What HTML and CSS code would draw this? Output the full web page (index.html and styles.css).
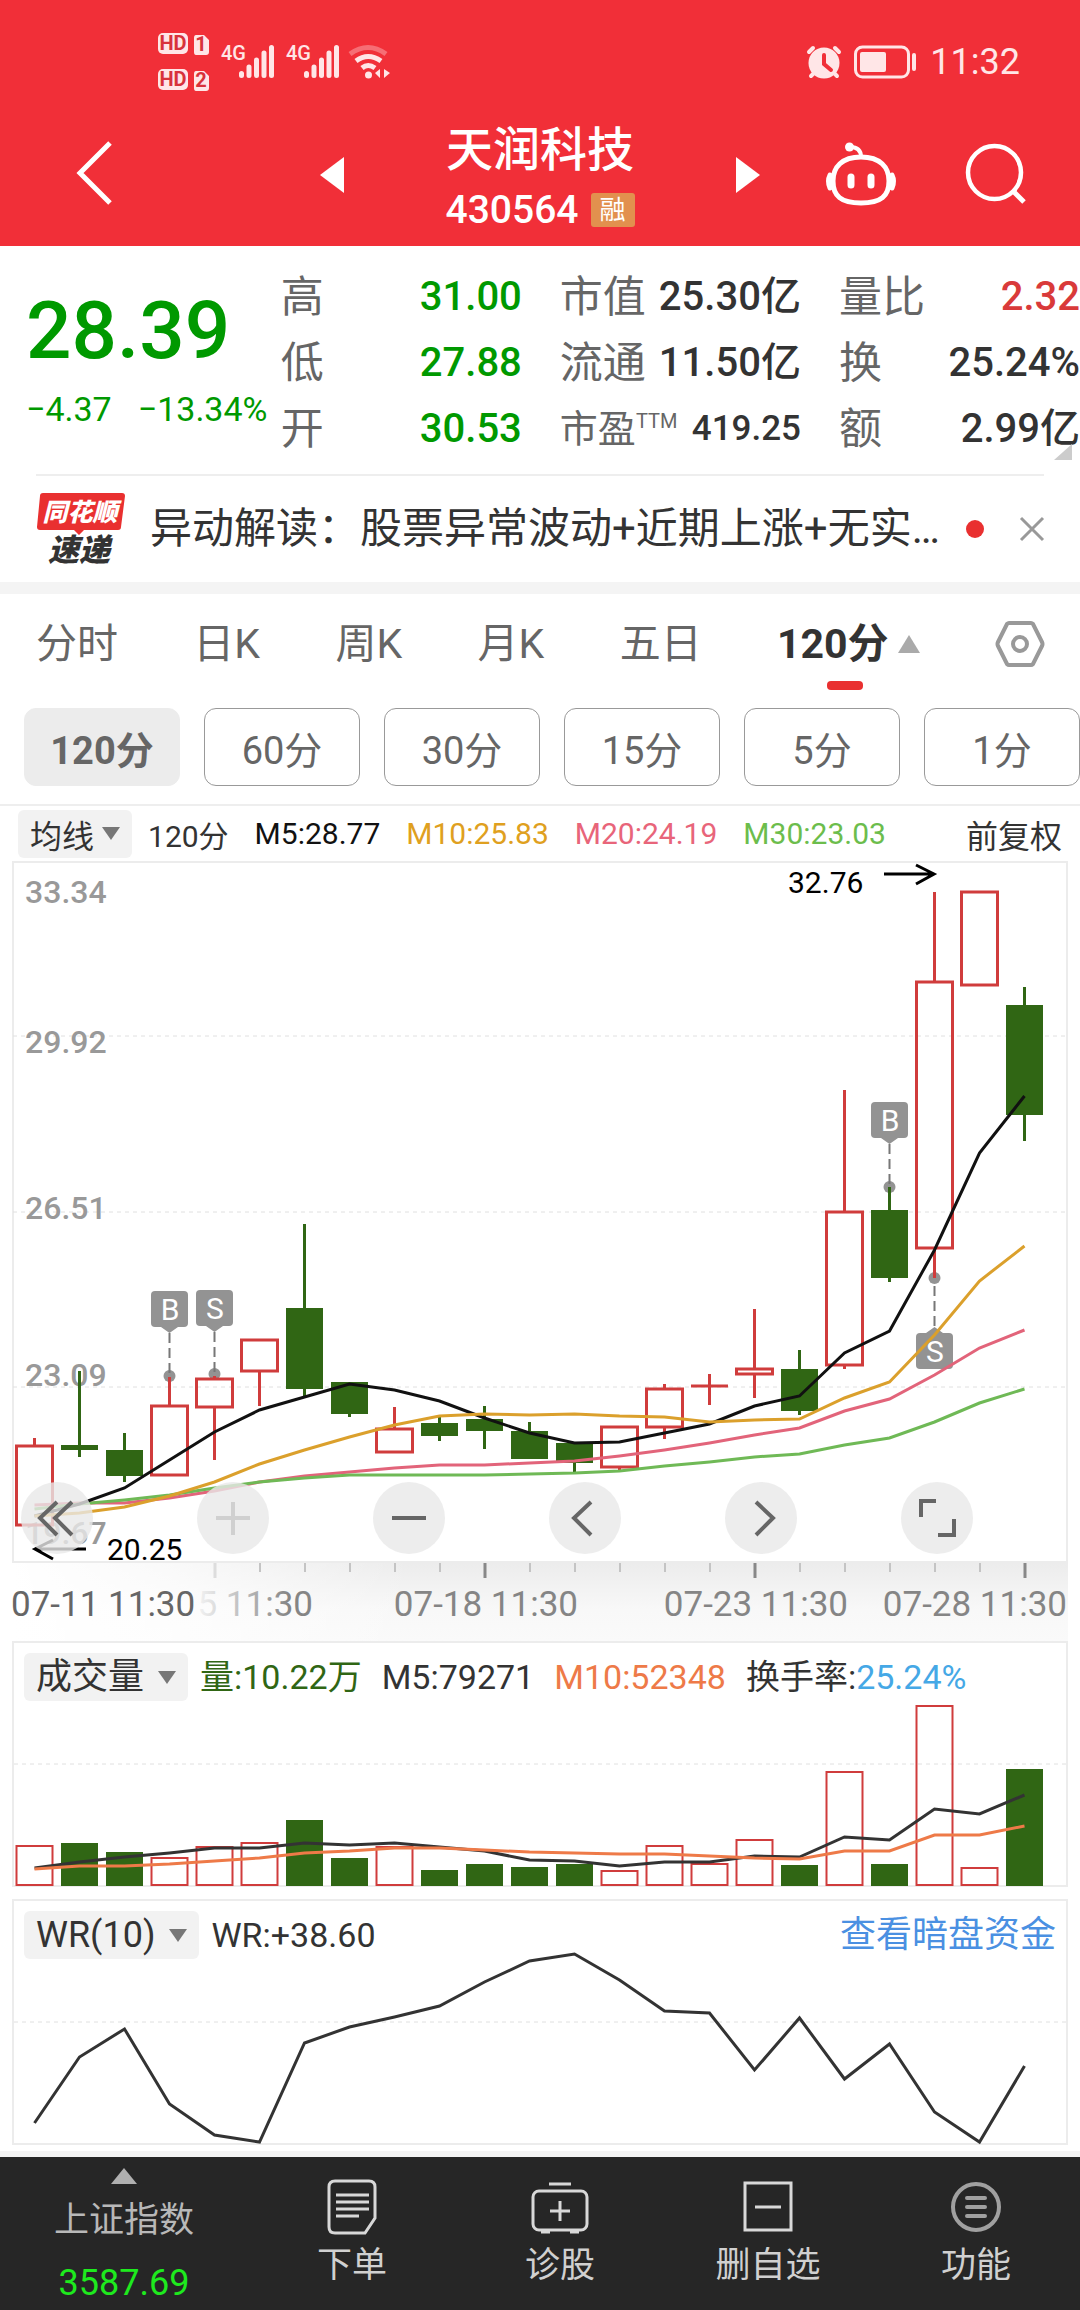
FILE: index.html
```html
<!DOCTYPE html>
<html lang="zh-CN">

<head>
    <meta charset="utf-8">
    <meta name="viewport" content="width=device-width, initial-scale=1">
    <title>天润科技 430564</title>
    <link rel="stylesheet" href="styles.css">
</head>

<body>
    <header class="top">
        <div class="status">
            <svg class="status-left" width="236" height="64" viewBox="156 30 236 64" fill="#ffe6e7">
                <rect x="158" y="33" width="30" height="21" rx="5" />
                <rect x="158" y="69" width="30" height="21" rx="5" />
                <path d="M196 35h8l5 5v12q0 3-3 3h-10q-2 0-2-3v-14q0-3 2-3zM196 71h8l5 5v12q0 3-3 3h-10q-2 0-2-3v-14q0-3 2-3z" />
                <g class="hd">
                    <text x="173" y="50">HD</text>
                    <text x="173" y="86">HD</text>
                    <text x="201" y="51">1</text>
                    <text x="201" y="87">2</text>
                </g>
                <text class="net" x="221" y="60">4G</text>
                <text class="net" x="286" y="60">4G</text>
                <g stroke="#ffe6e7" stroke-width="5" stroke-linecap="round">
                    <path d="M241.500 73.500v2M249 67v8.500M256.500 60v15.500M264 53v22.500M271.500 47.500v28" />
                    <path d="M306.500 73.500v2M314 67v8.500M321.500 60v15.500M329 53v22.500M336.500 47.500v28" />
                </g>
                <g fill="none" stroke="#ffe6e7" stroke-width="5">
                    <path d="M350 54q18-13 36 0" opacity=".35" />
                    <path d="M356 61q12-9 25 0M362 68q6-5 13 0" />
                </g>
                <circle cx="368.500" cy="75" r="3.500" />
                <path d="M380 69v9l-5-5zM384 69l6 4-6 5z" />
            </svg>
            <svg width="36" height="34" viewBox="0 0 36 34">
                <circle cx="18" cy="18" r="15.500" fill="#ffe6e7" />
                <path d="M3 7l4-4M33 7l-4-4M5 31l5-5M31 31l-5-5" stroke="#ffe6e7" stroke-width="4" stroke-linecap="round" />
                <path d="M18 10v9l7 6" fill="none" stroke="#f12f38" stroke-width="4" stroke-linecap="round" />
            </svg>
            <svg width="64" height="34" viewBox="0 0 64 34" fill="#ffe6e7">
                <rect x="1.500" y="2" width="53" height="30" rx="7" fill="none" stroke="#ffe6e7" stroke-width="3" />
                <rect x="6" y="7" width="26" height="20" rx="2" />
                <rect x="58" y="8" width="4" height="18" rx="2" />
            </svg>
            <span class="clock">11:32</span>
        </div>
        <div class="titlebar">
            <div class="side">
                <button class="icon-btn" aria-label="返回">
                    <svg width="36" height="64" viewBox="0 0 36 64" fill="none" stroke="#fff" stroke-width="5"><path d="M34 2L4 32l30 30" /></svg>
                </button>
            </div>
            <div class="switcher">
                <button class="icon-btn" aria-label="上一只">
                    <svg width="24" height="36" viewBox="0 0 24 36" fill="#fff"><path d="M24 0v36L0 18z" /></svg>
                </button>
                <div class="stock">
                    <h1>天润科技</h1>
                    <p><span>430564</span><span class="tag">融</span></p>
                </div>
                <button class="icon-btn" aria-label="下一只">
                    <svg width="24" height="36" viewBox="0 0 24 36" fill="#fff"><path d="M0 0v36l24-18z" /></svg>
                </button>
            </div>
            <div class="side right">
                <button class="icon-btn" aria-label="智能助手">
                    <svg width="70" height="64" viewBox="0 0 70 64" fill="none" stroke="#fff" stroke-width="5">
                        <path d="M35 15c19 0 28 10 28 24 0 15-8 22-28 22S7 54 7 39c0-14 9-24 28-24z" />
                        <path d="M24 5c7 0 11 3 11 10" stroke-width="4" />
                        <circle cx="23.500" cy="5" r="4.500" fill="#fff" stroke="none" />
                        <path d="M4 33q-3 6 0 13M66 33q3 6 0 13" stroke-width="5" stroke-linecap="round" />
                        <path d="M25 35v8M45 35v8" stroke-width="7" stroke-linecap="round" />
                    </svg>
                </button>
                <button class="icon-btn" aria-label="搜索">
                    <svg width="60" height="60" viewBox="0 0 60 60" fill="none" stroke="#fff" stroke-width="4.500">
                        <circle cx="28.500" cy="28.500" r="26.500" />
                        <path d="M47 47l11 11" stroke-width="5" />
                    </svg>
                </button>
            </div>
        </div>
    </header>

    <section class="quote">
        <div class="price down">
            <strong>28.39</strong>
            <p><span>−4.37</span><span>−13.34%</span></p>
        </div>
        <dl class="stats">
            <div><dt>高</dt><dd class="down">31.00</dd></div>
            <div><dt>市值</dt><dd>25.30亿</dd></div>
            <div><dt>量比</dt><dd class="up">2.32</dd></div>
            <div><dt>低</dt><dd class="down">27.88</dd></div>
            <div><dt>流通</dt><dd>11.50亿</dd></div>
            <div><dt>换</dt><dd>25.24%</dd></div>
            <div><dt>开</dt><dd class="down">30.53</dd></div>
            <div class="pe"><dt>市盈<sup>TTM</sup></dt><dd>419.25</dd></div>
            <div><dt>额</dt><dd>2.99亿</dd></div>
        </dl>
        <i class="corner"></i>
    </section>

    <section class="news">
        <svg class="news-logo" width="90" height="74" viewBox="0 0 90 74">
            <path d="M7 1h79q3 0 3 3l-4 31q0 3-3 3H48l-5 5-5-5H4q-3 0-3-3L4 4q0-3 3-3z" fill="#e93030" />
            <text x="44" y="29" font-size="25" fill="#fff">同花顺</text>
            <text x="43" y="69" font-size="31" fill="#333">速递</text>
        </svg>
        <a href="#">异动解读：股票异常波动+近期上涨+无实…</a>
        <i class="dot"></i>
        <button class="icon-btn" aria-label="关闭">
            <svg width="24" height="24" viewBox="0 0 24 24" stroke="#999" stroke-width="3"><path d="M1 1l22 22M23 1L1 23" /></svg>
        </button>
    </section>

    <nav class="tabs">
        <button>分时</button>
        <button>日K</button>
        <button>周K</button>
        <button>月K</button>
        <button>五日</button>
        <button class="active"><span>120分</span><svg width="24" height="20" viewBox="0 0 24 20" fill="#aaa"><path d="M12 1l11 18H1z" /></svg></button>
        <button aria-label="设置">
            <svg width="48" height="46" viewBox="0 0 48 46" fill="none" stroke="#999" stroke-width="4">
                <path d="M13 2h22q1 0 2 1l9 18q1 2 0 4l-9 18q-1 1-2 1H13q-1 0-2-1L2 25q-1-2 0-4l9-18q1-1 2-1z" />
                <circle cx="24" cy="23" r="7" />
            </svg>
        </button>
    </nav>
    <div class="periods">
        <button class="active">120分</button>
        <button>60分</button>
        <button>30分</button>
        <button>15分</button>
        <button>5分</button>
        <button>1分</button>
    </div>

    <div class="legend">
        <button class="pill">均线<i></i></button>
        <span class="cycle">120分</span>
        <span class="m5">M5:28.77</span>
        <span class="m10">M10:25.83</span>
        <span class="m20">M20:24.19</span>
        <span class="m30">M30:23.03</span>
        <a class="adjust" href="#">前复权</a>
    </div>

    <section class="kline">
        <svg class="plot" viewBox="0 0 1080 702">
            <rect class="frame" x="13" y="1" width="1054" height="700" />
            <path class="grid" d="M13 175H1067M13 351H1067M13 526H1067" />
            <g class="scale">
                <text x="25" y="42">33.34</text>
                <text x="25" y="192">29.92</text>
                <text x="25" y="358">26.51</text>
                <text x="25" y="525">23.09</text>
                <text x="25" y="683">19.67</text>
            </g>
            <!-- buy / sell marks -->
            <g class="mark">
                <circle cx="169.500" cy="515" r="6" />
                <circle cx="214.500" cy="513" r="6" />
                <circle cx="889.500" cy="326" r="6" />
                <circle cx="934.500" cy="417" r="6" />
                <path class="lead" d="M169.500 472v43M214.500 471v42M889.500 283v43M934.500 425v42" />
                <path d="M161 466h17l-8.500 6zM206 465h17l-8.500 6zM881 277h17l-8.500 6zM926 472h17l-8.500-6z" />
                <rect x="151" y="430" width="37" height="36" rx="4" />
                <rect x="196" y="429" width="37" height="36" rx="4" />
                <rect x="871" y="241" width="37" height="36" rx="4" />
                <rect x="916" y="472" width="37" height="36" rx="4" />
                <text x="170" y="459">B</text>
                <text x="215" y="458">S</text>
                <text x="890" y="270">B</text>
                <text x="935" y="501">S</text>
            </g>
            <!-- rising candles -->
            <path class="rise" d="M34.500 577v8M16.500 585h36v79h-36z
                M169.500 516v29M151.500 545h36v69h-36z
                M214.500 515v3M214.500 546v53M196.500 518h36v28h-36z
                M259.500 510v35M241.500 479h36v31h-36z
                M394.500 546v22M376.500 568h36v23h-36z
                M619.500 606v3M601.500 566h36v40h-36z
                M664.500 523v5M664.500 566v12M646.500 528h36v38h-36z
                M709.500 513v31M691 525h37
                M754.500 448v60M754.500 513v24M736.500 508h36v5h-36z
                M844.500 229v122M844.500 504v4M826.500 351h36v153h-36z
                M934.500 31v90M934.500 387v30M916.500 121h36v266h-36z
                M961.500 31h36v93h-36z" />
            <!-- falling candles -->
            <path class="fall-wick" d="M79.500 510v86M124.500 572v49M304.500 363v172M349.500 521v35M439.500 556v24M484.500 545v43M529.500 561v37M574.500 582v29M799.500 489v65M889.500 326v95M1024.500 126v154" />
            <path class="fall" d="M61 584h37v5h-37zM106 589h37v26h-37zM286 447h37v81h-37zM331 521h37v32h-37zM421 562h37v13h-37zM466 558h37v12h-37zM511 570h37v28h-37zM556 582h37v20h-37zM781 508h37v42h-37zM871 349h37v68h-37zM1006 144h37v110h-37z" />
            <polyline class="line m20" points="34.500,644 79.500,642 124.500,642 169.500,637 214.500,630 259.500,621 304.500,615 349.500,611 394.500,607 439.500,604 484.500,604 529.500,602 574.500,600 619.500,595 664.500,589 709.500,582 754.500,574 799.500,567 844.500,550 889.500,538 934.500,514 979.500,487 1024.500,469" />
            <polyline class="line m30" points="34.500,648 79.500,643 124.500,639 169.500,634 214.500,627 259.500,621 304.500,617 349.500,614 394.500,614 439.500,614 484.500,614 529.500,613 574.500,612 619.500,610 664.500,605 709.500,601 754.500,596 799.500,593 844.500,584 889.500,577 934.500,561 979.500,542 1024.500,528" />
            <polyline class="line m5" points="34.500,655 79.500,643 124.500,627 169.500,599 214.500,571 259.500,549 304.500,536 349.500,523 394.500,529 439.500,540 484.500,557 529.500,572 574.500,582 619.500,581 664.500,572 709.500,563 754.500,545 799.500,535 844.500,492 889.500,470 934.500,389 979.500,292 1024.500,235" />
            <polyline class="line m10" points="34.500,655 79.500,652 124.500,646 169.500,635 214.500,621 259.500,603 304.500,589 349.500,576 394.500,564 439.500,555 484.500,553 529.500,554 574.500,553 619.500,555 664.500,556 709.500,561 754.500,559 799.500,558 844.500,537 889.500,521 934.500,474 979.500,420 1024.500,385" />
            <g class="extreme">
                <text x="788" y="32">32.76</text>
                <path d="M884 13h50M916 4l18 9-18 10" />
                <text x="107" y="699">20.25</text>
                <path d="M86 688H36M53 679l-18 9 18 10" />
            </g>
        </svg>
        <div class="tools">
            <button aria-label="最早"><svg viewBox="0 0 72 72"><path d="M36 20L19 36l17 17M51 20L34 36l17 17" /></svg></button>
            <button aria-label="放大" disabled><svg viewBox="0 0 72 72"><path d="M36 20v33M19 36h34" /></svg></button>
            <button aria-label="缩小"><svg viewBox="0 0 72 72"><path d="M19 36h34" /></svg></button>
            <button aria-label="左移"><svg viewBox="0 0 72 72"><path d="M42 20L25 36l17 17" /></svg></button>
            <button aria-label="右移"><svg viewBox="0 0 72 72"><path d="M31 20l17 16-17 17" /></svg></button>
            <button aria-label="全屏"><svg viewBox="0 0 72 72"><path d="M20 35V19h15M53 37v16H37" /></svg></button>
        </div>
    </section>
    <svg class="axis" viewBox="0 0 1080 78">
        <defs>
            <linearGradient id="shade" x1="0" y1="0" x2="0" y2="1">
                <stop offset="0" stop-color="#ececec" />
                <stop offset=".6" stop-color="#f8f8f8" />
                <stop offset="1" stop-color="#fafafa" />
            </linearGradient>
            <linearGradient id="fade" x1="0" y1="0" x2="1" y2="0">
                <stop offset="0" stop-color="#fff" />
                <stop offset=".4" stop-color="#fff" stop-opacity=".7" />
                <stop offset="1" stop-color="#fff" stop-opacity="0" />
            </linearGradient>
            <linearGradient id="textFade" gradientUnits="userSpaceOnUse" x1="200" y1="0" x2="290" y2="0">
                <stop offset="0" stop-color="#f0f0f0" />
                <stop offset="1" stop-color="#858585" />
            </linearGradient>
        </defs>
        <rect x="12" y="0" width="1056" height="78" fill="url(#shade)" />
        <rect x="12" y="0" width="400" height="78" fill="url(#fade)" />
        <path d="M260 0v9M305 0v9M350 0v9M395 0v9M440 0v9M530 0v9M575 0v9M620 0v9M665 0v9M710 0v9M800 0v9M845 0v9M890 0v9M935 0v9M980 0v9" stroke="#c4c4c4" stroke-width="2" />
        <path d="M215 0v15" stroke="#ddd" stroke-width="3" />
        <path d="M485 0v15M755 0v15M1025 0v15" stroke="#888" stroke-width="3" />
        <text class="first" x="11" y="53">07-11 11:30</text>
        <text class="faded" x="313" y="53">5 11:30</text>
        <text x="578" y="53">07-18 11:30</text>
        <text x="848" y="53">07-23 11:30</text>
        <text x="1067" y="53">07-28 11:30</text>
    </svg>

    <section class="panel">
        <svg class="plot" viewBox="14 0 1052 242">
            <path class="grid" d="M14 121H1066" />
            <path class="vol-rise" d="M16.500 242v-39h36v39zM151.500 242v-27h36v27zM196.500 242v-38h36v38zM241.500 242v-42h36v42zM376.500 242v-38h36v38zM601.500 242v-14h36v14zM646.500 242v-39h36v39zM691.500 242v-21h36v21zM736.500 242v-45h36v45zM826.500 242v-113h36v113zM916.500 242v-179h36v179zM961.500 242v-17h36v17z" />
            <path class="fall" d="M61 243v-43h37v43zM106 243v-34h37v34zM286 243v-66h37v66zM331 243v-28h37v28zM421 243v-16h37v16zM466 243v-22h37v22zM511 243v-19h37v19zM556 243v-22h37v22zM781 243v-21h37v21zM871 243v-22h37v22zM1006 243v-117h37v117z" />
            <polyline class="line dark" points="34.500,225 79.500,219 124.500,214 169.500,210 214.500,205 259.500,205 304.500,200 349.500,202 394.500,200 439.500,204 484.500,208 529.500,217 574.500,218 619.500,223 664.500,219 709.500,219 754.500,213 799.500,214 844.500,194 889.500,197 934.500,166 979.500,171 1024.500,152" />
            <polyline class="line orange" points="34.500,226 79.500,223 124.500,223 169.500,221 214.500,218 259.500,215 304.500,210 349.500,208 394.500,205 439.500,205 484.500,207 529.500,209 574.500,210 619.500,211 664.500,211 709.500,213 754.500,215 799.500,216 844.500,208 889.500,208 934.500,192 979.500,192 1024.500,183" />
        </svg>
        <div class="panel-head">
            <button class="pill">成交量<i></i></button>
            <span class="vol">量:10.22万</span>
            <span>M5:79271</span>
            <span class="avg10">M10:52348</span>
            <span>换手率:<b>25.24%</b></span>
        </div>
    </section>

    <section class="panel">
        <svg class="plot" viewBox="14 0 1052 242">
            <path class="grid" d="M14 121H1066" />
            <polyline class="line dark" points="34.500,222 79.500,156 124.500,128 169.500,203 214.500,234 259.500,241 304.500,142 349.500,126 394.500,116 439.500,105 484.500,81 529.500,60 574.500,53 619.500,79 664.500,110 709.500,112 754.500,169 799.500,117 844.500,178 889.500,143 934.500,211 979.500,241 1024.500,165" />
        </svg>
        <div class="panel-head">
            <button class="pill">WR(10)<i></i></button>
            <span>WR:+38.60</span>
            <a class="dark-pool" href="#">查看暗盘资金</a>
        </div>
    </section>

    <nav class="bottom">
        <a class="index" href="#">
            <svg width="26" height="16" viewBox="0 0 26 16" fill="#b0b0b0"><path d="M13 0l13 16H0z" /></svg>
            <span>上证指数</span>
            <b>3587.69</b>
        </a>
        <a href="#">
            <svg width="58" height="56" viewBox="0 0 58 56">
                <path d="M12 2h34q6 0 6 6v31L42 54H12q-6 0-6-6V8q0-6 6-6z" />
                <path d="M13 16h33M13 23h33M13 30h33M13 37h23" />
            </svg>
            <span>下单</span>
        </a>
        <a href="#">
            <svg width="58" height="56" viewBox="0 0 58 56">
                <rect x="2" y="12" width="54" height="39" rx="6" />
                <path d="M18 5h22M10 53h9M39 53h9M29 22v20M19 32h20" />
            </svg>
            <span>诊股</span>
        </a>
        <a href="#">
            <svg width="58" height="56" viewBox="0 0 58 56">
                <rect x="6" y="4" width="46" height="47" />
                <path d="M16 28h26" />
            </svg>
            <span>删自选</span>
        </a>
        <a href="#">
            <svg class="grey" width="58" height="56" viewBox="0 0 58 56">
                <circle cx="29" cy="28" r="23" />
                <path d="M20 19h18M20 28h18M20 37h18" stroke-linecap="round" />
            </svg>
            <span>功能</span>
        </a>
    </nav>
</body>

</html>
```
FILE: styles.css
```css
* {
    box-sizing: border-box;
}

body {
    margin: 0;
    background: #fff;
    color: #333;
    font-family: Roboto, "Noto Sans CJK SC", sans-serif;
}

h1,
p,
dl,
dd {
    margin: 0;
}

h1 {
    font-weight: 500;
}

button {
    padding: 0;
    border: 0;
    background: none;
    color: inherit;
    font: inherit;
}

a {
    color: inherit;
    text-decoration: none;
}

svg {
    display: block;
    overflow: visible;
}

/* header */
.top {
    height: 246px;
    background: #f12f38;
    color: #fff;
}

.status {
    display: flex;
    align-items: center;
    gap: 12px;
    height: 120px;
    padding: 4px 60px 0 156px;
    color: #ffe6e7;
}

.status-left {
    margin-right: auto;
}

.hd {
    fill: #d8323b;
    font-size: 20px;
    font-weight: 700;
    text-anchor: middle;
}

.net {
    font-size: 20px;
    font-weight: 500;
}

.clock {
    font-size: 36px;
}

.titlebar {
    display: grid;
    grid-template-columns: 1fr 440px 1fr;
    height: 112px;
    padding: 0 54px;
}

.side,
.switcher {
    display: flex;
    align-items: center;
}

.side {
    padding: 0 0 14px 22px;
}

.side.right {
    justify-content: flex-end;
    gap: 70px;
    padding: 0 0 12px;
}

.switcher {
    justify-content: space-between;
}

.switcher .icon-btn {
    margin-bottom: 10px;
}

.stock {
    text-align: center;
}

.stock h1 {
    font-size: 47px;
    line-height: 60px;
}

.stock p {
    display: flex;
    justify-content: center;
    align-items: center;
    gap: 12px;
    font-size: 39px;
    font-weight: 500;
    line-height: 60px;
}

.tag {
    width: 44px;
    border-radius: 3px;
    background: #e2904e;
    font-size: 26px;
    font-weight: 400;
    line-height: 34px;
}

/* quote */
.quote {
    position: relative;
    display: flex;
    height: 228px;
    padding-top: 18px;
}

.price {
    flex: 0 0 26%;
    padding: 22px 0 0 26px;
}

.price strong {
    display: block;
    font-size: 80px;
    font-weight: 500;
    line-height: 90px;
}

.price p {
    display: flex;
    gap: 26px;
    font-size: 34px;
    line-height: 66px;
}

.stats {
    flex: 1;
    display: grid;
    grid-template-columns: repeat(3, 1fr);
    grid-auto-rows: 66px;
    column-gap: 38px;
}

.stats div {
    display: flex;
    justify-content: space-between;
    align-items: center;
    white-space: nowrap;
}

.stats dt {
    color: #666;
    font-size: 43px;
    line-height: 66px;
}

.stats dd {
    font-size: 40px;
    font-weight: 500;
    line-height: 66px;
}

.stats .pe dt {
    font-size: 38px;
}

.stats .pe dd {
    font-size: 35px;
}

.pe sup {
    font-size: 20px;
    line-height: 20px;
}

.down,
.stats .down {
    color: #009900;
}

.stats .up {
    color: #d93a3a;
}

.corner {
    position: absolute;
    right: 8px;
    bottom: 14px;
    border-left: 18px solid transparent;
    border-bottom: 16px solid #ccc;
}

/* news */
.news {
    display: flex;
    align-items: center;
    height: 108px;
    margin: 0 36px;
    border-top: 2px solid #eee;
}

.news-logo text {
    font-weight: 900;
    font-style: italic;
    text-anchor: middle;
}

.news a {
    flex: 1;
    margin-left: 24px;
    font-size: 42px;
    line-height: 60px;
    white-space: nowrap;
}

.dot {
    width: 18px;
    height: 18px;
    margin: 0 36px 0 12px;
    border-radius: 50%;
    background: #e93030;
}

/* tabs */
.tabs {
    display: flex;
    justify-content: space-between;
    align-items: center;
    height: 118px;
    padding: 0 36px 6px;
    border-top: 12px solid #f4f4f4;
    color: #666;
    font-size: 41px;
    line-height: 60px;
}

.tabs .active {
    position: relative;
    display: flex;
    align-items: center;
    gap: 8px;
    color: #333;
    font-weight: 700;
}

.tabs .active::after {
    content: "";
    position: absolute;
    left: 50px;
    bottom: -16px;
    width: 36px;
    height: 9px;
    border-radius: 4px;
    background: #e93030;
}

.periods {
    display: flex;
    gap: 24px;
    padding: 8px 0 18px 24px;
    border-bottom: 2px solid #eee;
    color: #666;
    font-size: 38px;
}

.periods button {
    flex: 1;
    height: 78px;
    border: 1px solid #999;
    border-radius: 12px;
}

.periods .active {
    border-color: #ececec;
    background: #ececec;
    font-weight: 700;
}

/* indicators */
.pill {
    display: flex;
    align-items: center;
    gap: 8px;
    height: 48px;
    padding: 0 12px;
    border-radius: 6px;
    background: #f2f2f2;
}

.pill i {
    border: 9px solid transparent;
    border-top: 13px solid #777;
    border-bottom: 0;
}

.legend {
    display: flex;
    align-items: center;
    gap: 26px;
    height: 55px;
    padding: 0 18px;
    font-size: 30px;
}

.legend .pill {
    margin-right: -10px;
    font-size: 32px;
}

.adjust {
    margin-left: auto;
    font-size: 32px;
}

.legend .m5 {
    color: #111;
}

.legend .m10 {
    color: #dfa020;
}

.legend .m20 {
    color: #e8657a;
}

.legend .m30 {
    color: #6cbd4c;
}

.kline {
    display: grid;
}

.kline > *,
.panel > * {
    grid-area: 1 / 1;
}

.plot,
.axis {
    width: 100%;
}

.frame {
    fill: none;
    stroke: #ececec;
    stroke-width: 2;
}

.grid {
    stroke: #e0e0e0;
    stroke-width: 1;
    stroke-dasharray: 4 4;
}

.scale text {
    fill: #999;
    font-size: 32px;
    font-weight: 500;
}

.rise,
.vol-rise {
    fill: none;
    stroke: #d03c3c;
    stroke-width: 3;
}

.vol-rise {
    stroke-width: 2;
}

.fall {
    fill: #306614;
}

.fall-wick {
    stroke: #306614;
    stroke-width: 3;
}

.line {
    fill: none;
    stroke-width: 3;
}

.line.m5 {
    stroke: #111;
}

.line.m10 {
    stroke: #dba02c;
}

.line.m20 {
    stroke: #e2647a;
}

.line.m30 {
    stroke: #6fb956;
}

.line.dark {
    stroke: #333;
}

.line.orange {
    stroke: #ee7a48;
}

.mark {
    fill: #939393;
}

.mark .lead {
    stroke: #777;
    stroke-width: 2;
    stroke-dasharray: 10 5;
}

.mark text {
    fill: #fff;
    font-size: 30px;
    text-anchor: middle;
}

.extreme text {
    font-size: 30px;
}

.extreme path {
    fill: none;
    stroke: #000;
    stroke-width: 3;
}

.tools {
    align-self: end;
    display: flex;
    justify-content: space-between;
    padding: 0 107px 9px 21px;
}

.tools button {
    width: 72px;
    height: 72px;
    border-radius: 50%;
    background: rgba(232, 232, 232, .8);
}

.tools svg {
    fill: none;
    stroke: #666;
    stroke-width: 4;
}

.tools button:disabled svg {
    stroke: #d0d0d0;
}

.axis text {
    fill: #858585;
    font-size: 35px;
    text-anchor: end;
}

.axis .first {
    fill: #666;
    text-anchor: start;
}

.axis .faded {
    fill: url(#textFade);
}

.panel {
    display: grid;
    margin: 0 12px 12px;
    border: 2px solid #ececec;
}

.panel + .panel {
    margin-bottom: 6px;
}

.panel-head {
    align-self: start;
    display: flex;
    align-items: center;
    gap: 20px;
    padding: 10px 10px 0;
    font-size: 34px;
    line-height: 48px;
}

.panel-head .pill {
    gap: 14px;
    margin-right: -8px;
    font-size: 36px;
}

.panel-head b {
    color: #45a8e6;
    font-weight: 400;
}

.vol {
    color: #306614;
}

.avg10 {
    color: #ee7a48;
}

.dark-pool {
    margin-left: auto;
    color: #4a90e2;
    font-size: 36px;
}

/* bottom bar */
.bottom {
    display: grid;
    grid-template-columns: 248fr repeat(4, 208fr);
    height: 160px;
    border-top: 6px solid #f4f4f4;
    background: #262626;
    color: #d0d0d0;
    font-size: 35px;
}

.bottom a {
    display: flex;
    flex-direction: column;
    align-items: center;
    padding-top: 22px;
    line-height: 62px;
}

.bottom .index {
    padding-top: 11px;
    color: #b8b8b8;
}

.bottom .index span {
    padding-top: 6px;
}

.bottom b {
    color: #1eea1e;
    font-size: 36px;
    font-weight: 400;
}

.bottom a:not(.index) svg {
    fill: none;
    stroke: #d8d8d8;
    stroke-width: 3;
}

.bottom a:not(.index) .grey {
    stroke: #a0a0a0;
    stroke-width: 4;
}
```
